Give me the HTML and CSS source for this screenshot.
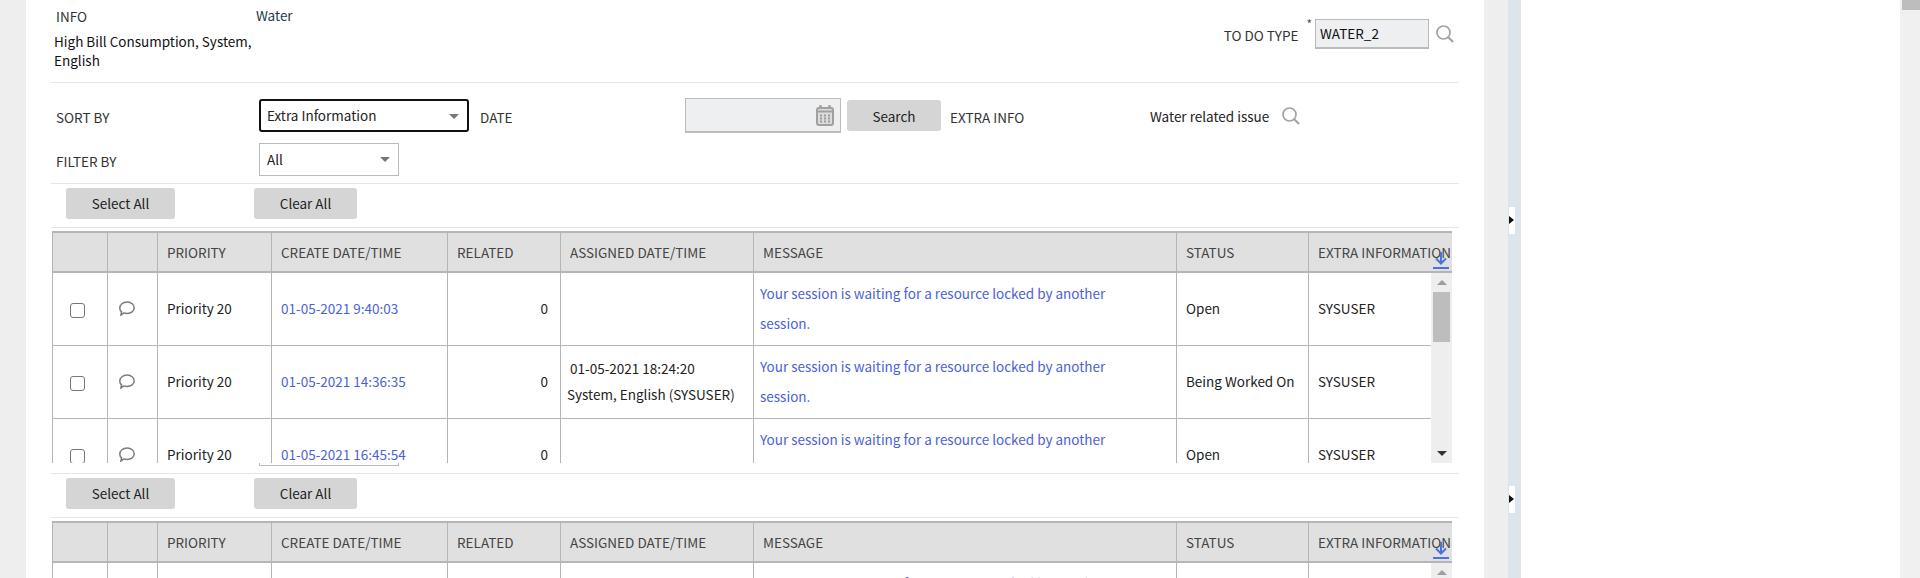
FILE: index.html
```html
<!DOCTYPE html>
<html>
<head>
    <meta charset="utf-8">
    <title>To Do List</title>
    <link rel="stylesheet" href="styles.css">
</head>
<body>
    <svg class="icon-defs" width="0" height="0">
        <symbol id="icon-search" viewBox="0 0 18 18">
            <circle cx="7.5" cy="7.5" r="6.5" fill="none" stroke="#a3a3a3" stroke-width="1.7"/>
            <path d="M12.3 12.3L17 17" fill="none" stroke="#a3a3a3" stroke-width="2.2"/>
        </symbol>
        <symbol id="icon-comment" viewBox="0 0 16 15">
            <path d="M1.8 14.2L2.6 10.9C1.4 9.9 .8 8.7 .8 7.2C.8 3.7 4 1 8.2 1C12.2 1 15.2 3.6 15.2 6.8C15.2 10.1 12.1 12.4 8.2 12.4C7 12.4 5.9 12.2 4.9 11.9L1.8 14.2Z" fill="none" stroke="#7c7c7c" stroke-width="1.5" stroke-linejoin="round"/>
        </symbol>
        <symbol id="icon-download" viewBox="0 0 16 17">
            <path d="M8 0V11M3 6.5L8 11.5L13 6.5" fill="none" stroke="#4a70e2" stroke-width="2"/>
            <path d="M0 16H16" fill="none" stroke="#4a70e2" stroke-width="2"/>
        </symbol>
    </svg>

    <div class="gutter"></div>

    <main class="panel">
        <div class="top-row">
            <div class="info-col">
                <div class="field-label info-label">INFO</div>
                <div class="info-text">High Bill Consumption, System, English</div>
            </div>
            <div class="water-text">Water</div>
            <div class="todo-type">
                <span class="field-label todo-label">TO DO TYPE</span>
                <span class="required">*</span>
                <div class="readonly-input">WATER_2</div>
                <svg class="search-icon"><use href="#icon-search"/></svg>
            </div>
        </div>

        <div class="filter-row first">
            <div class="field-label name-col">SORT BY</div>
            <div class="select focused">Extra Information<span class="caret"></span></div>
            <div class="field-label date-label">DATE</div>
            <div class="date-input">
                <svg class="calendar" width="18" height="21" viewBox="0 0 18 21">
                    <rect x="3" y="0" width="3" height="5" rx="1" fill="#a8a8a8"/>
                    <rect x="12" y="0" width="3" height="5" rx="1" fill="#a8a8a8"/>
                    <rect x="1" y="3" width="16" height="17" rx="2" fill="#dcdcdc" stroke="#a0a0a0" stroke-width="2"/>
                    <path d="M1 6.5H17" stroke="#a0a0a0" stroke-width="2"/>
                    <path d="M4 10.5H14M4 13.5H14M4 16.5H14" stroke="#9a9a9a" stroke-width="2" stroke-dasharray="2 2"/>
                </svg>
            </div>
            <button class="btn search-btn">Search</button>
            <div class="field-label extra-label">EXTRA INFO</div>
            <div class="extra-value">Water related issue</div>
            <svg class="search-icon extra-search"><use href="#icon-search"/></svg>
        </div>

        <div class="filter-row second">
            <div class="field-label name-col">FILTER BY</div>
            <div class="select small">All<span class="caret"></span></div>
        </div>

        <div class="toolbar">
            <button class="btn select-all">Select All</button>
            <button class="btn clear-all">Clear All</button>
        </div>

        <section class="grid">
            <table class="grid-head">
                <colgroup>
                    <col class="c-check"><col class="c-note"><col class="c-priority"><col class="c-created"><col class="c-related"><col class="c-assigned"><col class="c-message"><col class="c-status"><col class="c-extra-wide">
                </colgroup>
                <tr>
                    <th></th><th></th><th>PRIORITY</th><th>CREATE DATE/TIME</th><th>RELATED</th><th>ASSIGNED DATE/TIME</th><th>MESSAGE</th><th>STATUS</th><th>EXTRA INFORMATION</th>
                </tr>
            </table>
            <svg class="download"><use href="#icon-download"/></svg>
            <div class="grid-scroll">
                <table class="grid-body">
                    <colgroup>
                        <col class="c-check"><col class="c-note"><col class="c-priority"><col class="c-created"><col class="c-related"><col class="c-assigned"><col class="c-message"><col class="c-status"><col class="c-extra">
                    </colgroup>
                    <tr>
                        <td class="check-cell"><input type="checkbox" class="check"></td>
                        <td class="note-cell"><svg class="note"><use href="#icon-comment"/></svg></td>
                        <td>Priority 20</td>
                        <td class="link">01-05-2021 9:40:03</td>
                        <td class="num">0</td>
                        <td></td>
                        <td class="link message">Your session is waiting for a resource locked by another session.</td>
                        <td>Open</td>
                        <td>SYSUSER</td>
                    </tr>
                    <tr>
                        <td class="check-cell"><input type="checkbox" class="check"></td>
                        <td class="note-cell"><svg class="note"><use href="#icon-comment"/></svg></td>
                        <td>Priority 20</td>
                        <td class="link">01-05-2021 14:36:35</td>
                        <td class="num">0</td>
                        <td class="assigned"><div class="assigned-date">01-05-2021 18:24:20</div>System, English (SYSUSER)</td>
                        <td class="link message">Your session is waiting for a resource locked by another session.</td>
                        <td>Being Worked On</td>
                        <td>SYSUSER</td>
                    </tr>
                    <tr>
                        <td class="check-cell"><input type="checkbox" class="check"></td>
                        <td class="note-cell"><svg class="note"><use href="#icon-comment"/></svg></td>
                        <td>Priority 20</td>
                        <td class="link">01-05-2021 16:45:54</td>
                        <td class="num">0</td>
                        <td></td>
                        <td class="link message">Your session is waiting for a resource locked by another session.</td>
                        <td>Open</td>
                        <td>SYSUSER</td>
                    </tr>
                </table>
                <div class="scrollbar">
                    <span class="arrow-up"></span>
                    <div class="thumb"></div>
                    <span class="arrow-down"></span>
                </div>
            </div>
        </section>
        <div class="stray-select"></div>

        <div class="toolbar">
            <button class="btn select-all">Select All</button>
            <button class="btn clear-all">Clear All</button>
        </div>

        <section class="grid">
            <table class="grid-head">
                <colgroup>
                    <col class="c-check"><col class="c-note"><col class="c-priority"><col class="c-created"><col class="c-related"><col class="c-assigned"><col class="c-message"><col class="c-status"><col class="c-extra-wide">
                </colgroup>
                <tr>
                    <th></th><th></th><th>PRIORITY</th><th>CREATE DATE/TIME</th><th>RELATED</th><th>ASSIGNED DATE/TIME</th><th>MESSAGE</th><th>STATUS</th><th>EXTRA INFORMATION</th>
                </tr>
            </table>
            <svg class="download"><use href="#icon-download"/></svg>
            <div class="grid-scroll">
                <table class="grid-body">
                    <colgroup>
                        <col class="c-check"><col class="c-note"><col class="c-priority"><col class="c-created"><col class="c-related"><col class="c-assigned"><col class="c-message"><col class="c-status"><col class="c-extra">
                    </colgroup>
                    <tr>
                        <td class="check-cell"><input type="checkbox" class="check"></td>
                        <td class="note-cell"><svg class="note"><use href="#icon-comment"/></svg></td>
                        <td>Priority 20</td>
                        <td class="link">01-05-2021 9:40:03</td>
                        <td class="num">0</td>
                        <td></td>
                        <td class="link message">Your session is waiting for a resource locked by another session.</td>
                        <td>Open</td>
                        <td>SYSUSER</td>
                    </tr>
                </table>
                <div class="scrollbar">
                    <span class="arrow-up"></span>
                    <div class="thumb"></div>
                </div>
            </div>
        </section>
    </main>

    <div class="gutter right"></div>
    <div class="splitter">
        <span class="split-tab first"></span>
        <span class="split-tab second"></span>
    </div>
    <div class="side"></div>
    <div class="page-scroll"><div class="page-thumb"></div></div>
</body>
</html>
```

FILE: styles.css
```css
html, body {
    margin: 0;
    height: 578px;
    overflow: hidden;
}
body {
    display: flex;
    font-family: "Noto Sans CJK JP", "Open Sans", sans-serif;
    font-size: 13.5px;
    color: #222;
    background: #fff;
}
.icon-defs {
    position: absolute;
}
.gutter {
    width: 26px;
    flex: none;
    background: #eeeeee;
}
.gutter.right {
    width: 24px;
}
.panel {
    width: 1408px;
    flex: none;
    padding: 0 25px;
    background: #fff;
    position: relative;
}
.splitter {
    width: 13px;
    flex: none;
    background: #dde5ec;
    position: relative;
}
.split-tab {
    position: absolute;
    left: 1px;
    width: 6px;
    height: 27px;
    background: #fff;
}
.split-tab::after {
    content: "";
    position: absolute;
    left: 0;
    top: 9px;
    border-left: 5px solid #111;
    border-top: 4px solid transparent;
    border-bottom: 4px solid transparent;
}
.split-tab.first {
    top: 207px;
}
.split-tab.second {
    top: 486px;
}
.side {
    flex: 1;
    background: #fff;
}
.page-scroll {
    width: 20px;
    flex: none;
    background: #f0f0f0;
}
.page-thumb {
    height: 10px;
    margin-left: 2px;
    background: #bdbdbd;
}

.field-label {
    line-height: 20px;
    color: #333;
}
.top-row {
    height: 82px;
    display: flex;
    border-bottom: 1px solid #e6e6e6;
}
.info-col {
    width: 205px;
    padding-left: 3px;
    box-sizing: border-box;
}
.info-label {
    margin: 6px 0 6px 2px;
}
.info-text {
    line-height: 19px;
    color: #111;
}
.water-text {
    margin-top: 5px;
    line-height: 20px;
    color: #1c3a4a;
}
.todo-type {
    margin-left: auto;
    display: flex;
    align-items: flex-start;
    padding-right: 5px;
}
.todo-label {
    margin-top: 25px;
}
.required {
    margin: 17px 3px 0 8px;
    line-height: 14px;
    font-size: 12px;
    color: #555;
}
.readonly-input {
    width: 114px;
    height: 30px;
    margin-top: 19px;
    box-sizing: border-box;
    padding-left: 4px;
    line-height: 27px;
    background: #eeeff1;
    border: 1px solid #bbb;
    border-bottom-width: 2px;
    color: #111;
}
.search-icon {
    width: 18px;
    height: 18px;
    margin: 25px 0 0 7px;
}

.filter-row {
    display: flex;
    align-items: flex-start;
}
.filter-row.first {
    height: 45px;
    padding-top: 15px;
}
.filter-row.second {
    height: 40px;
}
.name-col {
    width: 203px;
    padding-left: 5px;
    margin-top: 8px;
}
.first .name-col {
    margin-top: 9px;
}
.select {
    width: 210px;
    height: 33px;
    margin-top: 1px;
    box-sizing: border-box;
    padding-left: 7px;
    line-height: 31px;
    border: 1px solid #bbb;
    background: #fff;
    position: relative;
    color: #222;
}
.second .select {
    margin-top: 0;
}
.select.focused {
    border: 2px solid #111;
    border-radius: 3px;
    line-height: 29px;
    padding-left: 6px;
}
.select.small {
    width: 140px;
}
.caret {
    position: absolute;
    right: 8px;
    top: 13px;
    border-top: 5px solid #777;
    border-left: 5px solid transparent;
    border-right: 5px solid transparent;
}
.date-label {
    width: 205px;
    padding-left: 11px;
    margin-top: 9px;
}
.date-input {
    width: 156px;
    height: 35px;
    box-sizing: border-box;
    background: #eeeff1;
    border: 1px solid #bbb;
    border-bottom-width: 2px;
    position: relative;
}
.calendar {
    position: absolute;
    right: 6px;
    top: 6px;
}
.btn {
    height: 31px;
    padding: 0;
    border: none;
    border-radius: 3px;
    background: #d5d5d5;
    font-family: inherit;
    font-size: 13.5px;
    color: #222;
}
.search-btn {
    width: 94px;
    margin: 2px 0 0 6px;
}
.extra-label {
    width: 200px;
    margin: 9px 0 0 9px;
}
.extra-value {
    width: 132px;
    margin-top: 8px;
    line-height: 20px;
    color: #222;
}
.extra-search {
    margin: 9px 0 0 0;
}

.toolbar {
    height: 39px;
    padding-top: 4px;
    display: flex;
    align-items: flex-start;
    border-top: 1px solid #e6e6e6;
    border-bottom: 1px solid #e6e6e6;
}
.toolbar .btn {
    padding-bottom: 2px;
}
.select-all {
    width: 109px;
    margin-left: 15px;
}
.clear-all {
    width: 103px;
    margin-left: 79px;
}

.grid {
    width: 1400px;
    height: 232px;
    margin: 3px 0 10px 1px;
    position: relative;
    overflow: hidden;
}
table {
    border-collapse: collapse;
    table-layout: fixed;
}
.grid-head {
    width: 1400px;
}
.grid-body {
    width: 1378px;
    flex: none;
}
.c-check { width: 55px; }
.c-note { width: 50px; }
.c-priority { width: 114px; }
.c-created { width: 176px; }
.c-related { width: 113px; }
.c-assigned { width: 193px; }
.c-message { width: 423px; }
.c-status { width: 132px; }
.c-extra { width: 122px; }
.c-extra-wide { width: 144px; }
th {
    height: 37px;
    padding: 0 0 1px 9px;
    text-align: left;
    font-weight: 400;
    background: #e0e0e0;
    color: #444;
    white-space: nowrap;
    overflow: hidden;
    border-top: 2px solid #b5b5b5;
    border-bottom: 2px solid #b5b5b5;
    border-left: 1px solid #b5b5b5;
    border-right: 1px solid #b5b5b5;
}
.grid-head th:last-child {
    border-right: none;
}
.grid-scroll {
    display: flex;
    align-items: flex-start;
}
td {
    height: 70px;
    padding: 0 0 2px 9px;
    border: 1px solid #b5b5b5;
    border-top: none;
    color: #222;
    box-sizing: content-box;
}
.grid-body tr td:last-child {
    border-right: none;
}
.grid-body td.link {
    color: #4b62d6;
}
td.check-cell {
    padding: 0 0 2px 17px;
}
td.note-cell {
    padding: 0 0 2px 11px;
}
td.num {
    padding: 0 12px 2px 0;
    text-align: right;
}
td.message {
    padding: 0 60px 2px 6px;
    line-height: 30px;
}
td.assigned {
    padding-left: 6px;
    line-height: 26px;
}
.assigned-date {
    padding-left: 3px;
}
.check {
    appearance: none;
    width: 15px;
    height: 15px;
    margin: 0;
    border: 1.5px solid #777;
    border-radius: 3px;
    background: #fff;
    vertical-align: middle;
}
.note {
    display: inline-block;
    width: 16px;
    height: 15px;
    vertical-align: middle;
    margin-bottom: 2px;
}
.scrollbar {
    width: 21px;
    flex: none;
    height: 192px;
    background: #eeeeee;
    position: relative;
}
.thumb {
    position: absolute;
    left: 2px;
    top: 19px;
    width: 17px;
    height: 50px;
    background: #bdbdbd;
}
.arrow-up {
    position: absolute;
    left: 6px;
    top: 7px;
    border-bottom: 5px solid #9e9e9e;
    border-left: 5px solid transparent;
    border-right: 5px solid transparent;
}
.arrow-down {
    position: absolute;
    left: 6px;
    top: 178px;
    border-top: 5px solid #333;
    border-left: 5px solid transparent;
    border-right: 5px solid transparent;
}
.download {
    position: absolute;
    left: 1381px;
    top: 21px;
    width: 16px;
    height: 17px;
}
.stray-select {
    position: absolute;
    left: 233px;
    top: 463px;
    width: 138px;
    height: 2px;
    border: 1px solid #bbb;
    border-top: none;
}
```
